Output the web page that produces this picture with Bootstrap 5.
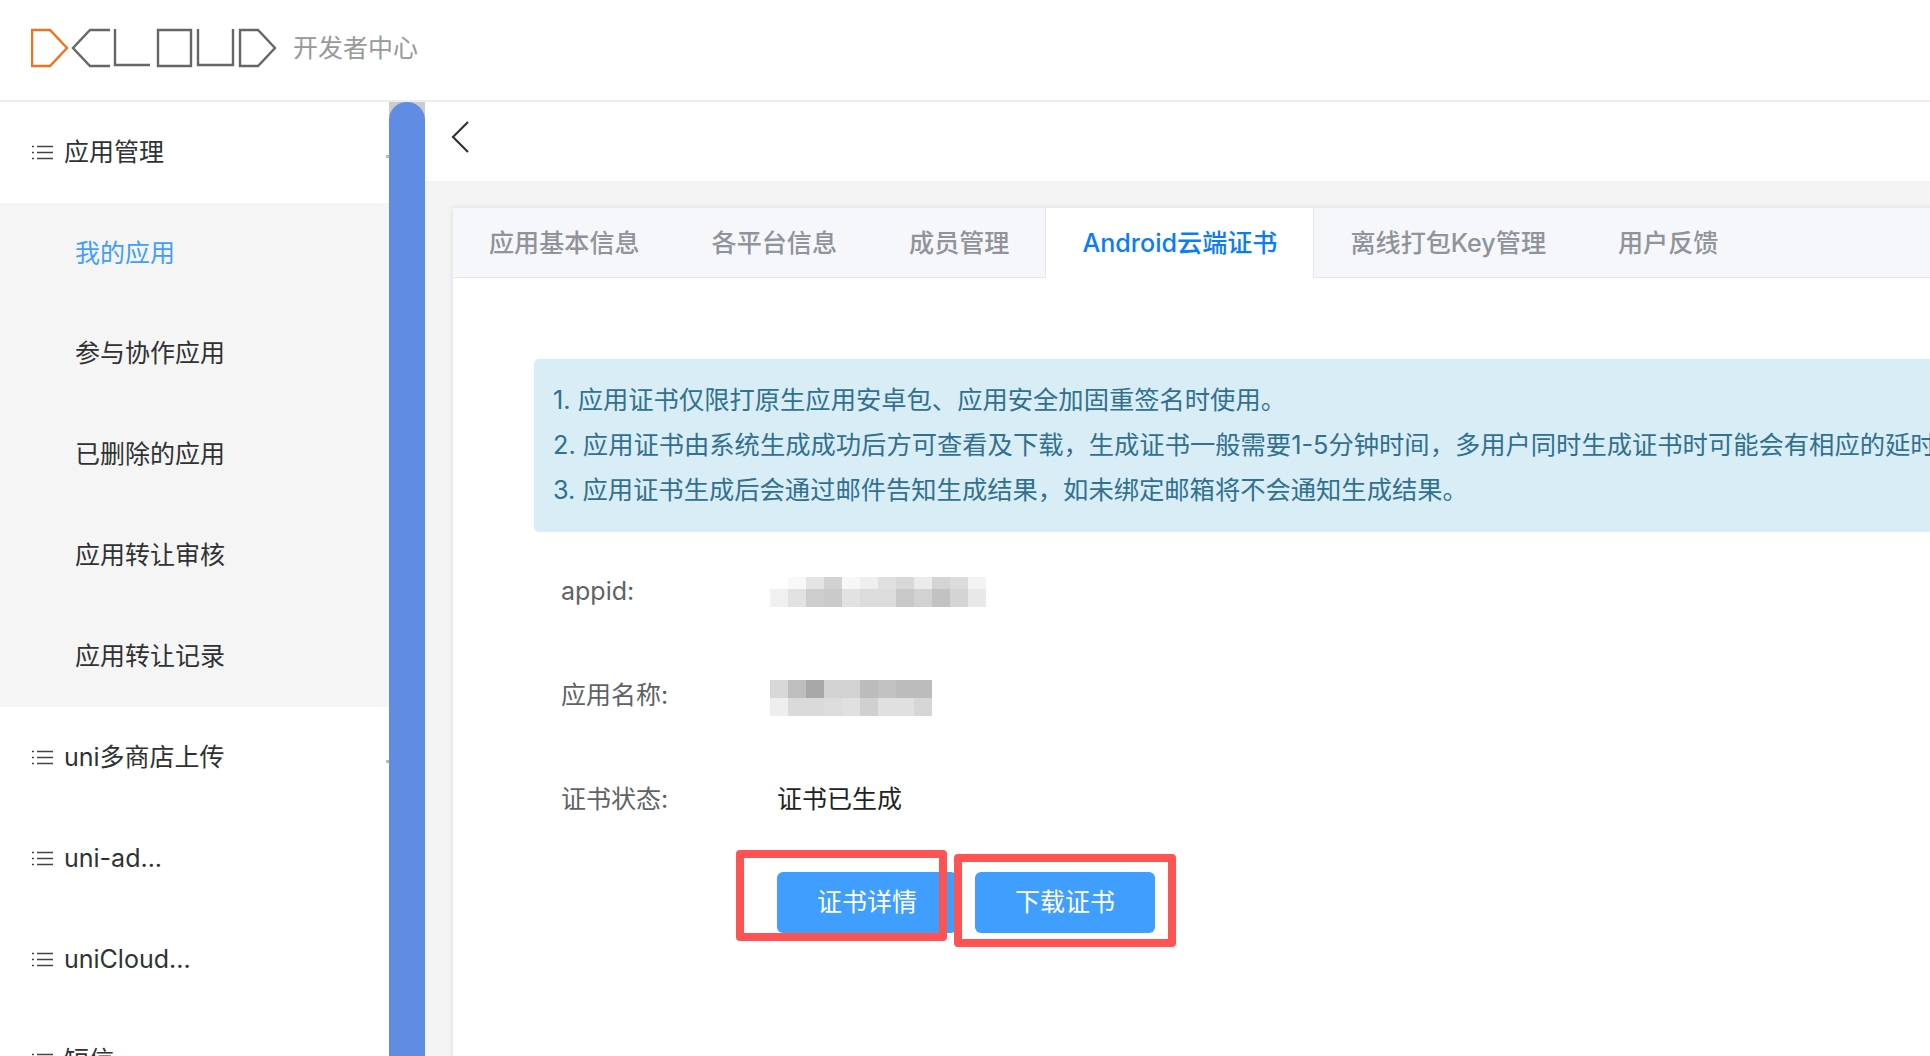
<!DOCTYPE html>
<html lang="zh-CN">
<head>
<meta charset="utf-8">
<title>开发者中心</title>
<link href="https://cdn.jsdelivr.net/npm/bootstrap@5.3.0/dist/css/bootstrap.min.css" rel="stylesheet">
<style>
html,body{height:100%;overflow:hidden}
body{font-family:Inter,"Noto Sans CJK SC",sans-serif;font-size:25px;color:#303133;background:#fff}
.top-bar{height:102px;padding:0 0 5px 31px;border-bottom:2px solid #ececec;background:#fff}
.logo-sub{color:#999;margin:2px 0 0 14px;font-size:25px;line-height:1}
.shell{height:954px}
.side-menu{width:389px;flex:none;overflow:hidden;flex-wrap:nowrap}
.menu-row{flex:none;height:100.9px;padding-left:32px;gap:11px;border:0;border-radius:0!important;color:#303133;background:transparent;position:relative}
.menu-row.sub-row{padding-left:75px;background:#f5f5f5}
.menu-row.sub-row.is-on{color:#409eff}
.caret-mark{position:absolute;right:0;top:53px;width:3px;height:3px;background:#bbb}
.scroll-track{width:36px;flex:none;background:#ccc}
.scroll-thumb{height:100%;background:#608ce3;border-radius:18px 18px 0 0}
.main-pane{background:#f4f4f4;min-width:0;overflow:hidden}
.back-bar{height:79px;background:#fff;padding:0 0 10px 26px}
.cert-card{width:1700px;margin:27px 0 0 28px;height:900px;border:0;border-radius:0;background:#fff;box-shadow:0 0 6px rgba(0,0,0,.1)}
.tab-strip{background:#f5f7fa;border-bottom:1px solid #e4e7ed;height:70px;flex-wrap:nowrap}
.tab-strip .nav-link{height:69px;padding:2px 36px 0;color:#909399;font-size:25.1px;font-weight:500;border:0;border-radius:0;display:flex;align-items:center;background:transparent;margin:0}
.tab-strip .nav-link.active{height:70px;color:#0a7cf5;background:#fff;border-left:1px solid #e4e7ed;border-right:1px solid #e4e7ed}
.tip-box{margin:81px 0 8px 81px;padding:18px 19px 20px;border:0;border-radius:5px 0 0 5px;background:#d9edf7;color:#31708f;line-height:45px;white-space:nowrap;font-size:25.3px}
.form-rows{padding-left:108px}
.form-line{height:104px}
.form-label-cell{width:209px;flex:none;color:#606266}
.mosaic-name{margin-top:3px}
.status-val{margin-left:7px;color:#222}
.action-line{position:relative;margin:20px 0 0 216px;gap:18px}
.act-btn{width:180px;height:61px;padding:0;font-size:25px;background:#409eff;border:0;border-radius:6px;color:#fff}
.red-frame{position:absolute;border:8px solid #fd5353;border-radius:4px;pointer-events:none}
.frame-one{left:-41px;top:-22px;width:211px;height:91px}
.frame-two{left:177px;top:-18px;width:222px;height:93px}
</style>
</head>
<body>
<nav class="navbar top-bar d-flex align-items-center justify-content-start flex-nowrap">
  <svg width="248" height="40" viewBox="0 0 248 40" fill="none" stroke-width="2.4" aria-hidden="true">
    <path d="M1 2H19L36 20 19 38H1Z" stroke="#f2701f"/>
    <path d="M79 2H59L42 20 59 38H79M84 1V37H119M127 2H160V38H127ZM167 1V37H202V1M209 2H227L244 20 227 38H209Z" stroke="#666"/>
  </svg>
  <span class="logo-sub">开发者中心</span>
</nav>
<div class="shell d-flex">
  <aside class="side-menu list-group list-group-flush">
    <div class="list-group-item menu-row d-flex align-items-center"><svg width="21" height="15" viewBox="0 0 21 15" fill="none" stroke="#444" stroke-width="1.4" aria-hidden="true"><path d="M0 1.5h2M0 7.5h2M0 13.5h2M5 1.5h16M5 7.5h16M5 13.5h16"/></svg><span>应用管理</span><i class="caret-mark"></i></div>
    <div class="list-group-item menu-row sub-row is-on d-flex align-items-center">我的应用</div>
    <div class="list-group-item menu-row sub-row d-flex align-items-center">参与协作应用</div>
    <div class="list-group-item menu-row sub-row d-flex align-items-center">已删除的应用</div>
    <div class="list-group-item menu-row sub-row d-flex align-items-center">应用转让审核</div>
    <div class="list-group-item menu-row sub-row d-flex align-items-center">应用转让记录</div>
    <div class="list-group-item menu-row d-flex align-items-center"><svg width="21" height="15" viewBox="0 0 21 15" fill="none" stroke="#444" stroke-width="1.4" aria-hidden="true"><path d="M0 1.5h2M0 7.5h2M0 13.5h2M5 1.5h16M5 7.5h16M5 13.5h16"/></svg><span>uni多商店上传</span><i class="caret-mark"></i></div>
    <div class="list-group-item menu-row d-flex align-items-center"><svg width="21" height="15" viewBox="0 0 21 15" fill="none" stroke="#444" stroke-width="1.4" aria-hidden="true"><path d="M0 1.5h2M0 7.5h2M0 13.5h2M5 1.5h16M5 7.5h16M5 13.5h16"/></svg><span>uni-ad...</span></div>
    <div class="list-group-item menu-row d-flex align-items-center"><svg width="21" height="15" viewBox="0 0 21 15" fill="none" stroke="#444" stroke-width="1.4" aria-hidden="true"><path d="M0 1.5h2M0 7.5h2M0 13.5h2M5 1.5h16M5 7.5h16M5 13.5h16"/></svg><span>uniCloud...</span></div>
    <div class="list-group-item menu-row d-flex align-items-center"><svg width="21" height="15" viewBox="0 0 21 15" fill="none" stroke="#444" stroke-width="1.4" aria-hidden="true"><path d="M0 1.5h2M0 7.5h2M0 13.5h2M5 1.5h16M5 7.5h16M5 13.5h16"/></svg><span>短信</span></div>
  </aside>
  <div class="scroll-track"><div class="scroll-thumb"></div></div>
  <main class="main-pane flex-grow-1">
    <div class="back-bar d-flex align-items-center">
      <svg width="20" height="32" viewBox="0 0 20 32" fill="none" stroke="#333" stroke-width="2.2" aria-hidden="true"><path d="M17 1 2 16l15 15"/></svg>
    </div>
    <section class="card cert-card">
      <ul class="nav tab-strip">
        <li class="nav-item"><a class="nav-link" href="#">应用基本信息</a></li>
        <li class="nav-item"><a class="nav-link" href="#">各平台信息</a></li>
        <li class="nav-item"><a class="nav-link" href="#">成员管理</a></li>
        <li class="nav-item"><a class="nav-link active" href="#">Android云端证书</a></li>
        <li class="nav-item"><a class="nav-link" href="#">离线打包Key管理</a></li>
        <li class="nav-item"><a class="nav-link" href="#">用户反馈</a></li>
      </ul>
      <div class="alert alert-info tip-box">
        <div>1. 应用证书仅限打原生应用安卓包、应用安全加固重签名时使用。</div>
        <div>2. 应用证书由系统生成成功后方可查看及下载，生成证书一般需要1-5分钟时间，多用户同时生成证书时可能会有相应的延时。</div>
        <div>3. 应用证书生成后会通过邮件告知生成结果，如未绑定邮箱将不会通知生成结果。</div>
      </div>
      <div class="form-rows">
        <div class="form-line d-flex align-items-center">
          <div class="form-label-cell">appid:</div>
          <svg width="216" height="30" viewBox="0 0 12 5" preserveAspectRatio="none" shape-rendering="crispEdges" role="img" aria-label="已打码">
            <g>
              <rect x="1" y="0" width="1" height="2" fill="#f8f8f8"/><rect x="2" y="0" width="1" height="2" fill="#e4e4e4"/><rect x="3" y="0" width="1" height="2" fill="#d2d2d2"/><rect x="4" y="0" width="1" height="2" fill="#f7f7f7"/><rect x="5" y="0" width="1" height="2" fill="#efefef"/><rect x="6" y="0" width="1" height="2" fill="#e0e0e0"/><rect x="7" y="0" width="1" height="2" fill="#d8d8d8"/><rect x="8" y="0" width="1" height="2" fill="#ebebeb"/><rect x="9" y="0" width="1" height="2" fill="#d4d4d4"/><rect x="10" y="0" width="1" height="2" fill="#dcdcdc"/><rect x="11" y="0" width="1" height="2" fill="#f3f3f3"/>
              <rect x="0" y="2" width="1" height="3" fill="#f0f0f0"/><rect x="1" y="2" width="1" height="3" fill="#e2e2e2"/><rect x="2" y="2" width="1" height="3" fill="#cdcdcd"/><rect x="3" y="2" width="1" height="3" fill="#cacaca"/><rect x="4" y="2" width="1" height="3" fill="#e2e2e2"/><rect x="5" y="2" width="1" height="3" fill="#dcdcdc"/><rect x="6" y="2" width="1" height="3" fill="#dcdcdc"/><rect x="7" y="2" width="1" height="3" fill="#c8c8c8"/><rect x="8" y="2" width="1" height="3" fill="#d2d2d2"/><rect x="9" y="2" width="1" height="3" fill="#c2c2c2"/><rect x="10" y="2" width="1" height="3" fill="#d4d4d4"/><rect x="11" y="2" width="1" height="3" fill="#e8e8e8"/>
            </g>
          </svg>
        </div>
        <div class="form-line d-flex align-items-center">
          <div class="form-label-cell">应用名称:</div>
          <svg class="mosaic-name" width="162" height="36" viewBox="0 0 9 2" preserveAspectRatio="none" shape-rendering="crispEdges" role="img" aria-label="已打码">
            <rect x="0" y="0" width="1" height="1" fill="#d8d8d8"/><rect x="1" y="0" width="1" height="1" fill="#bebebe"/><rect x="2" y="0" width="1" height="1" fill="#a8a8a8"/><rect x="3" y="0" width="1" height="1" fill="#d2d2d2"/><rect x="4" y="0" width="1" height="1" fill="#d2d2d2"/><rect x="5" y="0" width="1" height="1" fill="#bcbcbc"/><rect x="6" y="0" width="1" height="1" fill="#c2c2c2"/><rect x="7" y="0" width="1" height="1" fill="#bcbcbc"/><rect x="8" y="0" width="1" height="1" fill="#bcbcbc"/>
            <rect x="0" y="1" width="1" height="1" fill="#eeeeee"/><rect x="1" y="1" width="1" height="1" fill="#dadada"/><rect x="2" y="1" width="1" height="1" fill="#dadada"/><rect x="3" y="1" width="1" height="1" fill="#dcdcdc"/><rect x="4" y="1" width="1" height="1" fill="#e0e0e0"/><rect x="5" y="1" width="1" height="1" fill="#d0d0d0"/><rect x="6" y="1" width="1" height="1" fill="#e0e0e0"/><rect x="7" y="1" width="1" height="1" fill="#e0e0e0"/><rect x="8" y="1" width="1" height="1" fill="#d6d6d6"/>
          </svg>
        </div>
        <div class="form-line d-flex align-items-center">
          <div class="form-label-cell">证书状态:</div>
          <div class="status-val">证书已生成</div>
        </div>
        <div class="action-line d-flex">
          <button type="button" class="btn btn-primary act-btn">证书详情</button>
          <button type="button" class="btn btn-primary act-btn">下载证书</button>
          <div class="red-frame frame-one"></div>
          <div class="red-frame frame-two"></div>
        </div>
      </div>
    </section>
  </main>
</div>
<script src="https://cdn.jsdelivr.net/npm/bootstrap@5.3.0/dist/js/bootstrap.bundle.min.js"></script>
</body>
</html>
